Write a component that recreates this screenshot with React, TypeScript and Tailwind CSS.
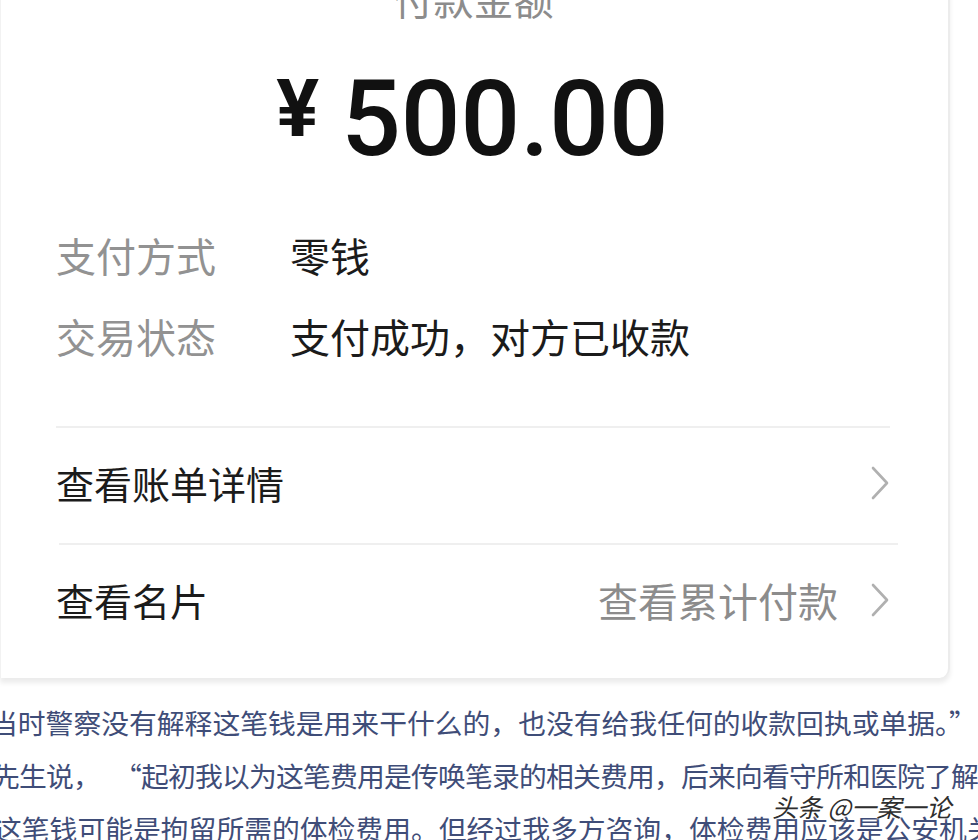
import React from "react";

const cjk = "font-['Noto_Sans_CJK_SC','Noto_Sans',sans-serif]";

function Chevron() {
  return (
    <svg width="20" height="34" viewBox="0 0 20 34" fill="none">
      <path d="M3 2 L17 17 L3 32" stroke="#b0b0b0" strokeWidth="2.6" strokeLinecap="round" strokeLinejoin="round" />
    </svg>
  );
}

function InfoRow({ label, value }: { label: string; value: string }) {
  return (
    <div className="flex items-center h-[40px] leading-[40px]">
      <span className="w-[234px] text-[#929292]">{label}</span>
      <span className="text-[#1b1b1b]">{value}</span>
    </div>
  );
}

export default function App() {
  return (
    <div className={`relative w-[978px] h-[840px] overflow-hidden bg-white ${cjk}`}>
      <div className="w-[950px] -mt-[24px] bg-white border-r-2 border-[#ececec] border-l border-l-[#f2f2f2] rounded-br-[10px] shadow-[0_5px_5px_rgba(0,0,0,0.08)] pb-[58px]">
        <div className="text-center text-[40px] leading-[44px] text-[#8c8c8c] pr-[2px]">付款金额</div>

        <div className="flex justify-center items-start mt-[47px] pr-[4px]">
          <span className="font-['Roboto',sans-serif] font-bold text-[80px] leading-none text-[#111] mt-[2px]">¥</span>
          <span className="ml-[22px] font-['Roboto',sans-serif] font-medium text-[105px] leading-none text-[#111]">500.00</span>
        </div>

        <div className="pl-[55px] pr-[58px]">
          <div className="mt-[63px] flex flex-col gap-[41px] text-[40px]">
            <InfoRow label="支付方式" value="零钱" />
            <InfoRow label="交易状态" value="支付成功，对方已收款" />
          </div>

          <div className="mt-[70px] h-[2px] bg-[#efefef]" />

          <div className="flex items-center justify-between h-[40px] mt-[35px]">
            <span className="text-[#1b1b1b] text-[38px] leading-[40px]">查看账单详情</span>
            <Chevron />
          </div>

          <div className="mt-[40px] h-[2px] bg-[#efefef] ml-[3px] -mr-[8px]" />

          <div className="flex items-center h-[40px] mt-[35px]">
            <span className="text-[#1b1b1b] text-[38px] leading-[40px]">查看名片</span>
            <span className="ml-auto text-[#8c8c8c] text-[40px] leading-[40px]">查看累计付款</span>
            <span className="ml-[32px]">
              <Chevron />
            </span>
          </div>
        </div>
      </div>

      <div className="mt-[18px] text-[27.8px] leading-[53px] text-[#3f4d78] whitespace-nowrap">
        <div className="-ml-[10px]">当时警察没有解释这笔钱是用来干什么的，也没有给我任何的收款回执或单据。”</div>
        <div className="-ml-[8px] tracking-[-0.8px]">
          先生说，<span className="inline-block w-[14px]" />“起初我以为这笔费用是传唤笔录的相关费用，后来向看守所和医院了解
        </div>
        <div className="-ml-[6px]">这笔钱可能是拘留所需的体检费用。但经过我多方咨询，体检费用应该是公安机关</div>
      </div>

      <div className="absolute left-[772px] top-[791px] text-[25px] leading-[30px] text-[#2e2e2e] italic whitespace-nowrap [text-shadow:0_0_2px_#fff,0_0_2px_#fff,0_0_3px_#fff]">
        头条 @一案一论
      </div>
    </div>
  );
}
